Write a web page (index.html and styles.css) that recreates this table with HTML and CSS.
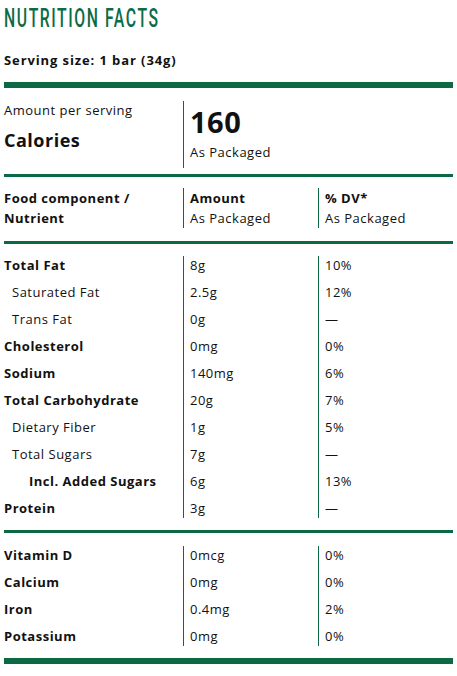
FILE: index.html
```html
<!DOCTYPE html>
<html lang="en">
<head>
  <meta charset="UTF-8" />
  <meta name="viewport" content="width=device-width, initial-scale=1.0"/>
  <title>Nutrition Facts</title>
  <link rel="stylesheet" href="styles.css">
</head>
<body>
  <div class="label">
    <h1 class="title">Nutrition Facts</h1>
    <p class="serving">Serving size: 1 bar (34g)</p>
    <div class="rule thick top"></div>

    <div class="grid calories">
      <div class="col">
        <div class="small">Amount per serving</div>
        <div class="cal-name">Calories</div>
      </div>
      <div class="col sep">
        <div class="cal-value">160</div>
        <div>As Packaged</div>
      </div>
      <div></div>
    </div>
    <div class="rule"></div>

    <div class="grid head">
      <div class="col">
        <div class="b">Food component /</div>
        <div class="b">Nutrient</div>
      </div>
      <div class="col sep">
        <div class="b">Amount</div>
        <div>As Packaged</div>
      </div>
      <div class="col sep">
        <div class="b">% DV*</div>
        <div>As Packaged</div>
      </div>
    </div>
    <div class="rule"></div>

    <div class="grid rows">
      <div class="col list">
        <div class="b">Total Fat</div>
        <div class="sub">Saturated Fat</div>
        <div class="sub">Trans Fat</div>
        <div class="b">Cholesterol</div>
        <div class="b">Sodium</div>
        <div class="b">Total Carbohydrate</div>
        <div class="sub">Dietary Fiber</div>
        <div class="sub">Total Sugars</div>
        <div class="b subsub">Incl. Added Sugars</div>
        <div class="b">Protein</div>
      </div>
      <div class="col list sep">
        <div>8g</div>
        <div>2.5g</div>
        <div>0g</div>
        <div>0mg</div>
        <div>140mg</div>
        <div>20g</div>
        <div>1g</div>
        <div>7g</div>
        <div>6g</div>
        <div>3g</div>
      </div>
      <div class="col list sep">
        <div>10%</div>
        <div>12%</div>
        <div>&mdash;</div>
        <div>0%</div>
        <div>6%</div>
        <div>7%</div>
        <div>5%</div>
        <div>&mdash;</div>
        <div>13%</div>
        <div>&mdash;</div>
      </div>
    </div>
    <div class="rule"></div>

    <div class="grid rows minerals">
      <div class="col list">
        <div class="b">Vitamin D</div>
        <div class="b">Calcium</div>
        <div class="b">Iron</div>
        <div class="b">Potassium</div>
      </div>
      <div class="col list sep">
        <div>0mcg</div>
        <div>0mg</div>
        <div>0.4mg</div>
        <div>0mg</div>
      </div>
      <div class="col list sep">
        <div>0%</div>
        <div>0%</div>
        <div>2%</div>
        <div>0%</div>
      </div>
    </div>
    <div class="rule thick"></div>
  </div>
</body>
</html>
```

FILE: styles.css
```css
body {
  margin: 0;
  padding: 0 4px;
  background: white;
  color: #111;
  font-family: "Open Sans", sans-serif;
  font-size: 13px;
  letter-spacing: 0.5px;
}

.title {
  margin: 0;
  padding-top: 5px;
  height: 28px;
  font-family: Roboto, sans-serif;
  font-weight: 500;
  font-size: 25px;
  line-height: 28px;
  letter-spacing: 2.5px;
  text-transform: uppercase;
  color: #0d6b45;
  transform: scaleX(0.63);
  transform-origin: left center;
  white-space: nowrap;
}

.serving {
  margin: 17px 0 0;
  font-weight: 700;
  line-height: 20px;
  letter-spacing: 0.9px;
}

.rule {
  height: 3px;
  background: #0b6a43;
}

.rule.thick {
  height: 6px;
}

.rule.top {
  margin-top: 12px;
}

.grid {
  display: grid;
  grid-template-columns: 179px 135px 1fr;
  padding: 12px 0;
}

.col {
  display: flex;
  flex-direction: column;
  line-height: 20px;
}

.sep {
  border-left: 1px solid #0b6a43;
  padding-left: 6px;
}

.b {
  font-weight: 700;
}

.calories {
  padding: 13px 0 6px;
}

.calories .sep {
  padding-bottom: 6px;
}

.small {
  line-height: 18px;
}

.cal-name {
  font-weight: 700;
  font-size: 18px;
  line-height: 24px;
  margin-top: 9px;
}

.cal-value {
  font-weight: 700;
  font-size: 29px;
  line-height: 40px;
  margin-top: 1px;
}

.head {
  padding: 11px 0 13px;
}

.list {
  gap: 8px;
  line-height: 19px;
}

.minerals {
  padding-top: 13px;
}

.sub {
  padding-left: 8px;
}

.subsub {
  padding-left: 25px;
}
```
